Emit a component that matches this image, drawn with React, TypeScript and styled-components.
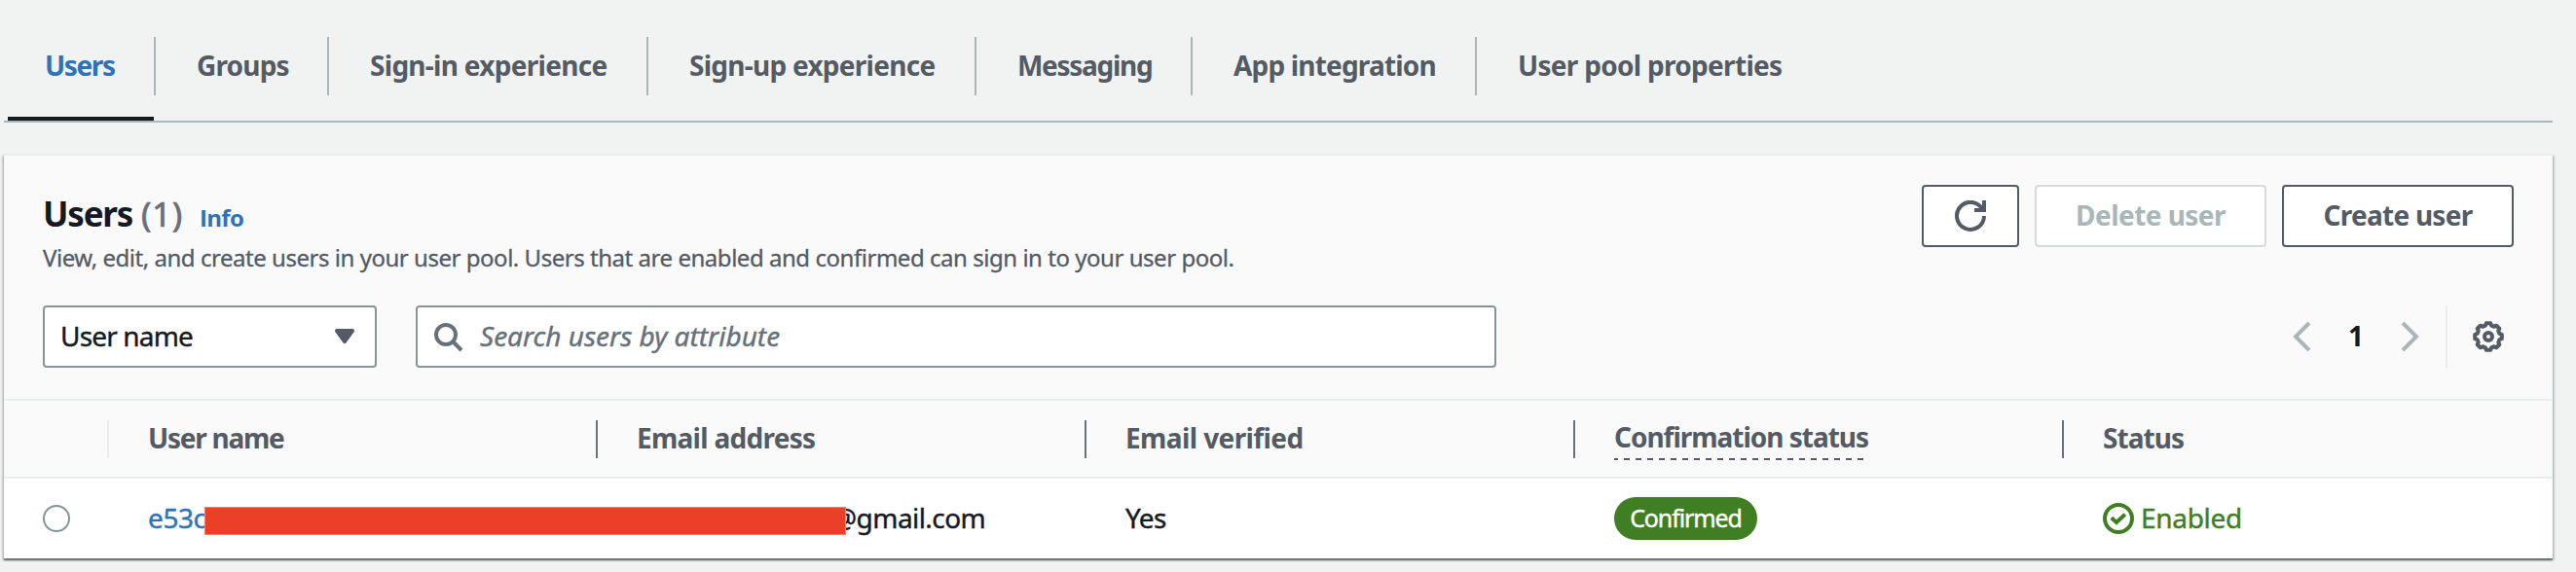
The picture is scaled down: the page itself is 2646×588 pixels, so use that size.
import React from "react";
import styled, { createGlobalStyle } from "styled-components";

const GlobalStyle = createGlobalStyle`
  * { box-sizing: border-box; }
  body {
    margin: 0;
    background: #f1f3f3;
    color: #16191f;
    font-family: "Noto Sans", "Open Sans", sans-serif;
    font-size: 28px;
  }
`;

const Page = styled.div`
  height: 588px;
  overflow: hidden;
`;

const Label = styled.span<{ $track?: number; $bold?: boolean }>`
  display: block;
  padding-bottom: 2px;
  line-height: 36px;
  white-space: nowrap;
  font-weight: ${(p) => (p.$bold ? 700 : 400)};
  letter-spacing: ${(p) => p.$track ?? 0}px;
  -webkit-text-stroke: ${(p) => (p.$bold ? 0 : 0.4)}px currentColor;
`;

/* Tabs */

const TabBar = styled.nav`
  display: flex;
  width: 2618px;
  height: 126px;
  margin-left: 4px;
  padding: 38px 0 0 4px;
  border-bottom: 2px solid #aab7b8;
`;

const Tab = styled.div<{ $width: number; $active?: boolean }>`
  flex: none;
  width: ${(p) => p.$width}px;
  display: flex;
  color: ${(p) => (p.$active ? "#2e73b8" : "#545b64")};
`;

const TabBody = styled.div<{ $active?: boolean }>`
  flex: 1;
  height: 86px;
  padding: 11px 0 0 ${(p) => (p.$active ? 38 : 42)}px;
  border-bottom: 4px solid ${(p) => (p.$active ? "#16191f" : "transparent")};
`;

const TabDivider = styled.div`
  width: 2px;
  height: 60px;
  background: #aab7b8;
`;

/* Panel */

const Panel = styled.section`
  width: 2618px;
  height: 416px;
  margin: 32px 0 0 4px;
  background: #fff;
  border-top: 2px solid #eaeded;
  box-shadow: 0 2px 1px 0 rgba(20, 28, 40, 0.28), 0 2px 2px 0 rgba(0, 28, 36, 0.3),
    2px 2px 2px 0 rgba(0, 28, 36, 0.15), -2px 2px 2px 0 rgba(0, 28, 36, 0.15);
`;

const PanelTop = styled.header`
  height: 252px;
  padding: 30px 40px 0;
  background: #fafafa;
  border-bottom: 2px solid #eaeded;
`;

const HeadingRow = styled.div`
  display: flex;
  justify-content: space-between;
  align-items: flex-start;
  height: 124px;
`;

const TitleLine = styled.div`
  display: flex;
  align-items: baseline;
  height: 50px;
  padding-top: 5px;
  line-height: 50px;
`;

const Title = styled.h1`
  margin: 0;
  width: 101px;
  font-size: 35px;
  font-weight: 700;
  letter-spacing: -1.2px;
`;

const Count = styled.span`
  width: 60px;
  font-size: 35px;
  letter-spacing: 0.6px;
  color: #687078;
  -webkit-text-stroke: 0.7px currentColor;
`;

const InfoLink = styled.a`
  font-family: "Open Sans", sans-serif;
  font-size: 24px;
  font-weight: 700;
  letter-spacing: -0.7px;
  color: #2e73b8;
`;

const Description = styled.p`
  margin: 8px 0 0;
  font-size: 24px;
  line-height: 34px;
  letter-spacing: -0.465px;
  white-space: nowrap;
  color: #545b64;
  -webkit-text-stroke: 0.3px currentColor;
`;

const Actions = styled.div`
  display: flex;
  gap: 16px;
`;

const Button = styled.button<{ $width: number; $disabled?: boolean }>`
  display: flex;
  align-items: center;
  justify-content: center;
  width: ${(p) => p.$width}px;
  height: 64px;
  padding: 0;
  border: 2px solid ${(p) => (p.$disabled ? "#d5dbdb" : "#545b64")};
  border-radius: 4px;
  background: #fff;
  color: ${(p) => (p.$disabled ? "#aab7b8" : "#545b64")};
  font: inherit;
`;

const ToolRow = styled.div`
  display: flex;
  align-items: center;
  height: 64px;
`;

const Field = styled.div<{ $width: number }>`
  display: flex;
  align-items: center;
  width: ${(p) => p.$width}px;
  height: 64px;
  border: 2px solid #879596;
  border-radius: 4px;
  background: #fff;
`;

const SelectField = styled(Field)`
  justify-content: space-between;
  padding: 0 15px 0 16px;
  color: #16191f;
`;

const SearchField = styled(Field)`
  margin-left: 40px;
  padding-left: 15px;
  gap: 17px;
  font-style: italic;
  color: #687078;
`;

const Pager = styled.div`
  display: flex;
  align-items: center;
  justify-content: space-between;
  width: 144px;
  margin-left: auto;
`;

const Preferences = styled.div`
  display: flex;
  align-items: center;
  height: 64px;
  margin-left: 20px;
  padding: 0 10px 0 26px;
  border-left: 2px solid #eaeded;
`;

/* Table */

const TableRow = styled.div<{ $head?: boolean }>`
  position: relative;
  display: grid;
  grid-template-columns: 108px repeat(5, 502px);
  align-items: center;
  height: ${(p) => (p.$head ? 80 : 82)}px;
  background: ${(p) => (p.$head ? "#fafafa" : "#fff")};
  border-bottom: ${(p) => (p.$head ? "2px solid #eaeded" : "none")};
  color: ${(p) => (p.$head ? "#545b64" : "#16191f")};
`;

const HeadCell = styled.div<{ $divider?: string }>`
  display: flex;
  align-items: center;
  height: 39px;
  padding-left: 40px;
  border-right: ${(p) => (p.$divider ? `2px solid ${p.$divider}` : "none")};
`;

const DashedHint = styled.div`
  position: relative;
  height: 42px;
  margin-top: 2px;
`;

const DashLine = styled.svg`
  position: absolute;
  left: 0;
  top: 40px;
`;

const Cell = styled.div`
  display: flex;
  align-items: center;
  padding-left: 40px;
`;

const RadioCell = styled.div`
  padding-left: 40px;
`;

const Radio = styled.div`
  width: 28px;
  height: 28px;
  border: 2px solid #879596;
  border-radius: 50%;
  background: #fff;
`;

const UserLink = styled(Label)`
  color: #2e73b8;
`;

const EmailText = styled(Label)`
  margin-left: 201px;
`;

const Redaction = styled.div`
  position: absolute;
  left: 206px;
  top: 29px;
  width: 659px;
  height: 29px;
  background: #eb4027;
  border: 1px solid #f07f6d;
`;

const Badge = styled.span`
  display: flex;
  align-items: center;
  justify-content: center;
  width: 147px;
  height: 44px;
  padding-bottom: 2px;
  border-radius: 22px;
  background: #3f7e23;
  color: #fff;
  font-size: 25px;
  letter-spacing: -1.1px;
  -webkit-text-stroke: 0.4px currentColor;
`;

const Status = styled.div`
  display: flex;
  align-items: center;
  gap: 7px;
  color: #3f7e23;
`;

/* Icons share a 16-unit grid drawn at 32px */

const Icon = styled.svg.attrs({ viewBox: "0 0 16 16", width: 32, height: 32 })<{
  $color?: string;
}>`
  flex: none;
  display: block;
  fill: none;
  stroke: ${(p) => p.$color ?? "currentColor"};
  stroke-width: 2;
`;

const gearPath = (() => {
  const points: string[] = [];
  for (let tooth = 0; tooth < 8; tooth++) {
    const steps: [number, number][] = [
      [-9, 7],
      [9, 7],
      [15, 5.9],
      [30, 5.9],
    ];
    steps.forEach(([offset, radius]) => {
      const a = ((tooth * 45 + offset) * Math.PI) / 180;
      points.push(`${(8 + radius * Math.sin(a)).toFixed(2)} ${(8 - radius * Math.cos(a)).toFixed(2)}`);
    });
  }
  return `M${points.join("L")}Z`;
})();

const tabs = [
  { name: "Users", width: 152, track: -1.36, active: true },
  { name: "Groups", width: 178, track: -0.82 },
  { name: "Sign-in experience", width: 328, track: -0.71 },
  { name: "Sign-up experience", width: 337, track: -0.73 },
  { name: "Messaging", width: 222, track: -1.28 },
  { name: "App integration", width: 292, track: -0.82 },
  { name: "User pool properties", width: 354, track: -0.7 },
];

export default function App() {
  return (
    <Page>
      <GlobalStyle />
      <TabBar>
        {tabs.map((tab, i) => (
          <Tab key={tab.name} $width={tab.width} $active={tab.active}>
            <TabBody $active={tab.active}>
              <Label $bold $track={tab.track}>
                {tab.name}
              </Label>
            </TabBody>
            {i < tabs.length - 1 && <TabDivider />}
          </Tab>
        ))}
      </TabBar>

      <Panel>
        <PanelTop>
          <HeadingRow>
            <div>
              <TitleLine>
                <Title>Users</Title>
                <Count>(1)</Count>
                <InfoLink>Info</InfoLink>
              </TitleLine>
              <Description>
                View, edit, and create users in your user pool. Users that are enabled and confirmed
                can sign in to your user pool.
              </Description>
            </div>
            <Actions>
              <Button $width={100} aria-label="Refresh">
                <Icon>
                  <path d="M10 5h5V0" />
                  <path d="M15 8a7 7 0 1 1-.7-3.1" />
                </Icon>
              </Button>
              <Button $width={238} $disabled>
                <Label $bold $track={-0.54}>
                  Delete user
                </Label>
              </Button>
              <Button $width={238}>
                <Label $bold $track={-0.75}>
                  Create user
                </Label>
              </Button>
            </Actions>
          </HeadingRow>

          <ToolRow>
            <SelectField $width={343}>
              <Label $track={-0.84}>User name</Label>
              <Icon $color="#545b64">
                <path d="M4 5h8l-4 5.6z" fill="#545b64" strokeLinejoin="round" />
              </Icon>
            </SelectField>
            <SearchField $width={1110}>
              <Icon $color="#687078">
                <circle cx="7" cy="7" r="5" />
                <path d="m15 15-4.5-4.5" />
              </Icon>
              <Label>Search users by attribute</Label>
            </SearchField>
            <Pager>
              <Icon $color="#aab7b8">
                <path d="M12 1 5 8l7 7" />
              </Icon>
              <Label $bold>1</Label>
              <Icon $color="#aab7b8">
                <path d="m4 1 7 7-7 7" />
              </Icon>
            </Pager>
            <Preferences>
              <Icon $color="#545b64">
                <path d={gearPath} strokeLinejoin="round" />
                <circle cx="8" cy="8" r="2" />
              </Icon>
            </Preferences>
          </ToolRow>
        </PanelTop>

        <TableRow $head>
          <HeadCell $divider="#eaeded" />
          <HeadCell $divider="#687078">
            <Label $bold $track={-1.25}>
              User name
            </Label>
          </HeadCell>
          <HeadCell $divider="#687078">
            <Label $bold $track={-0.72}>
              Email address
            </Label>
          </HeadCell>
          <HeadCell $divider="#687078">
            <Label $bold $track={-0.6}>
              Email verified
            </Label>
          </HeadCell>
          <HeadCell $divider="#687078">
            <DashedHint>
              <Label $bold $track={-1.02}>
                Confirmation status
              </Label>
              <DashLine width="261" height="2">
                <path d="M0 1h261" stroke="#545b64" strokeWidth="2" strokeDasharray="6 6" strokeDashoffset="2" />
              </DashLine>
            </DashedHint>
          </HeadCell>
          <HeadCell>
            <Label $bold $track={-0.94}>
              Status
            </Label>
          </HeadCell>
        </TableRow>

        <TableRow>
          <RadioCell>
            <Radio />
          </RadioCell>
          <Cell>
            <UserLink $track={-0.4}>e53c</UserLink>
          </Cell>
          <Cell>
            <EmailText $track={-0.56}>@gmail.com</EmailText>
          </Cell>
          <Cell>
            <Label $track={-0.62}>Yes</Label>
          </Cell>
          <Cell>
            <Badge>Confirmed</Badge>
          </Cell>
          <Cell>
            <Status>
              <Icon>
                <circle cx="8" cy="8" r="7" />
                <path d="M4.4 7.6 7 10l4.4-4.1" />
              </Icon>
              <Label $track={-0.3}>Enabled</Label>
            </Status>
          </Cell>
          <Redaction />
        </TableRow>
      </Panel>
    </Page>
  );
}
